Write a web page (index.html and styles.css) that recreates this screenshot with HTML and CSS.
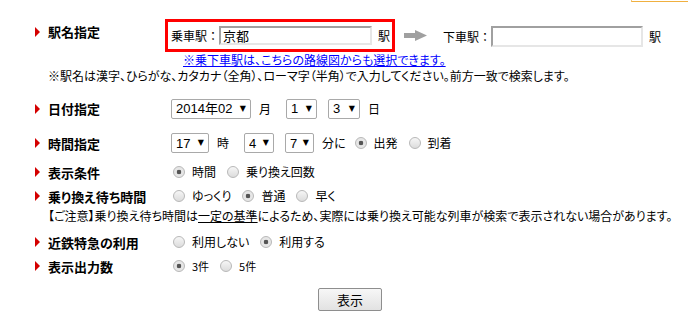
FILE: index.html
```html
<!DOCTYPE html>
<html lang="ja">
<head>
<meta charset="UTF-8" />
<meta name="viewport" content="width=device-width, initial-scale=1.0"/>
<title>経路検索</title>
<link rel="stylesheet" href="styles.css">
</head>
<body>
<div class="topbar"><div class="tab"></div></div>

<form class="search">
  <div class="row station">
    <div class="label">駅名指定</div>
    <div class="field">
      <div class="from">
        <span class="st-label">乗車駅：</span>
        <input type="text" class="station-input from-input" value="京都">
        <span class="eki">駅</span>
      </div>
      <svg class="arrow" width="23" height="11" viewBox="0 0 23 11">
        <rect x="0" y="3" width="12" height="5" fill="#a0a0a0"/>
        <polygon points="11,0 23,5.5 11,11" fill="#a0a0a0"/>
      </svg>
      <span class="st-label to-label">下車駅：</span>
      <input type="text" class="station-input to-input" value="">
      <span class="eki to-eki">駅</span>
    </div>
  </div>
  <p class="link"><a href="#">※乗下車駅は、こちらの路線図からも選択できます。</a></p>
  <p class="note">※駅名は漢字、ひらがな、カタカナ（全角）、ローマ字（半角）で入力してください。前方一致で検索します。</p>

  <div class="row date">
    <div class="label">日付指定</div>
    <div class="field">
      <span class="sel w80"><select><option>2014年02</option></select><i>▼</i></span>
      <span class="unit">月</span>
      <span class="sel w31"><select><option>1</option></select><i>▼</i></span>
      <span class="sel w32 gap"><select><option>3</option></select><i>▼</i></span>
      <span class="unit">日</span>
    </div>
  </div>

  <div class="row time">
    <div class="label">時間指定</div>
    <div class="field">
      <span class="sel w38"><select><option>17</option></select><i>▼</i></span>
      <span class="unit">時</span>
      <span class="sel w30"><select><option>4</option></select><i>▼</i></span>
      <span class="sel w28 gap"><select><option>7</option></select><i>▼</i></span>
      <span class="unit minute">分に</span>
      <label class="opt"><input type="radio" name="dir" checked>出発</label>
      <label class="opt"><input type="radio" name="dir">到着</label>
    </div>
  </div>

  <div class="row cond">
    <div class="label">表示条件</div>
    <div class="field">
      <label class="opt"><input type="radio" name="sort" checked>時間</label>
      <label class="opt"><input type="radio" name="sort">乗り換え回数</label>
    </div>
  </div>

  <div class="row wait">
    <div class="label">乗り換え待ち時間</div>
    <div class="field">
      <label class="opt"><input type="radio" name="wait">ゆっくり</label>
      <label class="opt"><input type="radio" name="wait" checked>普通</label>
      <label class="opt"><input type="radio" name="wait">早く</label>
    </div>
  </div>
  <p class="note caution">【ご注意】乗り換え待ち時間は<span class="ul">一定の基準</span>によるため、実際には乗り換え可能な列車が検索で表示されない場合があります。</p>

  <div class="row express">
    <div class="label">近鉄特急の利用</div>
    <div class="field">
      <label class="opt"><input type="radio" name="exp">利用しない</label>
      <label class="opt"><input type="radio" name="exp" checked>利用する</label>
    </div>
  </div>

  <div class="row count">
    <div class="label">表示出力数</div>
    <div class="field">
      <label class="opt small"><input type="radio" name="cnt" checked>3件</label>
      <label class="opt small"><input type="radio" name="cnt">5件</label>
    </div>
  </div>

  <div class="submit">
    <button type="button">表示</button>
  </div>
</form>
</body>
</html>
```

FILE: styles.css
```css
body {
  margin: 0;
  font-family: "Noto Sans CJK JP", sans-serif;
  font-size: 12px;
  font-feature-settings: "palt";
  color: #000;
  background: #fff;
}

.topbar {
  height: 2px;
  display: flex;
  justify-content: flex-end;
}

.tab {
  width: 56px;
  height: 1px;
  border-left: 1px solid #f3c878;
  border-bottom: 1px solid #f0b040;
}

.search {
  padding-left: 35px;
}

.row {
  display: flex;
  align-items: center;
  height: 20px;
}

.label {
  display: flex;
  align-items: center;
  width: 136px;
  flex-shrink: 0;
  font-size: 13px;
  font-weight: bold;
  line-height: 13px;
}

.label::before {
  content: "";
  border-left: 5px solid #d40000;
  border-top: 5px solid transparent;
  border-bottom: 5px solid transparent;
  margin-right: 8px;
}

.field {
  display: flex;
  align-items: center;
  line-height: 14px;
}

/* 駅名 */
.station {
  height: auto;
  align-items: flex-start;
  margin-top: 17px;
}

.station .label {
  padding-top: 6px;
}

.station .field {
  margin-left: -6px;
}

.st-label {
  font-feature-settings: normal;
}

.from {
  display: flex;
  align-items: center;
  height: 27px;
  padding: 0 2px 0 3px;
  border: 3px solid #f00;
}

.station-input {
  box-sizing: border-box;
  height: 19px;
  margin: 0;
  padding: 0 2px;
  font-family: "Noto Sans CJK JP", sans-serif;
  font-size: 13px;
  border-top: 2px solid #a0a0a0;
  border-left: 2px solid #a0a0a0;
  border-right: 2px solid #e6e6e6;
  border-bottom: 2px solid #e6e6e6;
  outline: none;
}

.from-input {
  width: 153px;
}

.to-input {
  width: 152px;
  height: 21px;
  margin-top: 2px;
}

.eki {
  margin-left: 6px;
}

.arrow {
  margin: 0 16px 0 9px;
}

.to-label,
.to-eki {
  margin-top: 2px;
}

.link,
.note {
  margin: 0;
  line-height: 16px;
  white-space: nowrap;
}

.link {
  padding-left: 148px;
}

.link a {
  color: #0000ff;
}

.note {
  padding-left: 13px;
}

/* select */
.sel {
  box-sizing: border-box;
  display: inline-flex;
  align-items: center;
  justify-content: space-between;
  height: 20px;
  padding: 0 4px;
  border: 1px solid #a9a9a9;
  border-radius: 2px;
  background: #fff;
}

.sel select {
  appearance: none;
  border: 0;
  padding: 0;
  margin: 0;
  background: transparent;
  font-family: "Liberation Sans", "Noto Sans CJK JP", sans-serif;
  font-size: 13px;
  color: #000;
  outline: none;
}

.sel i {
  font-style: normal;
  font-size: 8px;
  line-height: 8px;
  font-family: "DejaVu Sans", sans-serif;
}

.w80 { width: 80px; }
.w31 { width: 31px; }
.w32 { width: 32px; }
.w38 { width: 38px; }
.w30 { width: 30px; }
.w28 { width: 29px; }

.sel.gap {
  margin-left: 11px;
}

.unit {
  margin: 0 15px 0 8px;
}

.unit.minute {
  margin-right: 7px;
}

.date {
  margin-top: 14px;
  height: 21px;
}

.time {
  margin-top: 14px;
}

.cond {
  margin-top: 9px;
}

.wait {
  margin-top: 4px;
}

.caution {
  margin-top: 2px;
}

.ul {
  text-decoration: underline;
}

.express {
  margin-top: 8px;
}

.count {
  margin-top: 4px;
}

/* radio */
.opt {
  display: inline-flex;
  align-items: center;
  margin-right: 9px;
}

.opt.small {
  font-size: 11px;
}

.opt input {
  appearance: none;
  box-sizing: border-box;
  width: 12px;
  height: 12px;
  margin: 0 7px 0 2px;
  border: 1px solid #b8b8b8;
  border-radius: 50%;
  background: linear-gradient(#f6f6f6, #dcdcdc);
}

.opt input:checked {
  background: radial-gradient(circle, #555 0 2px, #e6e6e6 2.6px);
}

.submit {
  margin-top: 12px;
  padding-left: 283px;
}

.submit button {
  width: 64px;
  height: 23px;
  font-family: "Noto Sans CJK JP", sans-serif;
  font-size: 13px;
  line-height: 13px;
  border: 1px solid #8e8e8e;
  border-radius: 2px;
  background: linear-gradient(#f7f7f7, #e2e2e2);
  color: #000;
}
```
